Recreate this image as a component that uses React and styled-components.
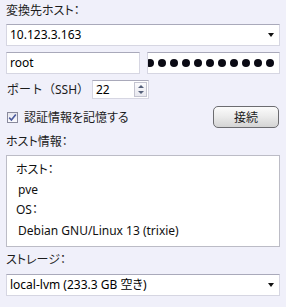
import React from "react";
import styled, { createGlobalStyle } from "styled-components";

const Global = createGlobalStyle`
  html, body { margin: 0; padding: 0; background: #f0f0fa; }
  body {
    font-family: "Noto Sans", "Noto Sans CJK JP", sans-serif;
    font-size: 12px;
    color: #111;
  }
`;

const Panel = styled.div`
  width: 286px;
  height: 307px;
  box-sizing: border-box;
  padding: 3px 6px 0 6px;
  display: flex;
  flex-direction: column;
  overflow: hidden;
`;

const Label = styled.div`
  height: 16px;
  line-height: 16px;
  color: #1c1c1c;
  font-feature-settings: "palt";
  margin-top: ${(p) => p.$mt || 0}px;
`;

const FieldBox = styled.div`
  box-sizing: border-box;
  height: ${(p) => p.$h || 22}px;
  width: ${(p) => (p.$w ? p.$w + "px" : "auto")};
  flex: ${(p) => (p.$grow ? "1 1 0" : "none")};
  background: #fff;
  border: 1px solid #d6d6e2;
  border-top-color: #a9a9ba;
  display: flex;
  align-items: center;
  padding-left: 3px;
  line-height: 16px;
  overflow: hidden;
  margin-top: ${(p) => p.$mt || 0}px;
  position: relative;
`;

const FieldText = styled.span`
  flex: 1;
  white-space: nowrap;
  color: #000;
  font-feature-settings: "palt";
`;

const Arrow = styled.span`
  width: 0;
  height: 0;
  border-left: 3.5px solid transparent;
  border-right: 3.5px solid transparent;
  border-top: 4px solid #111;
  margin-right: 5px;
  flex: none;
`;

const Row = styled.div`
  display: flex;
  align-items: center;
  gap: ${(p) => p.$gap || 0}px;
  margin-top: ${(p) => p.$mt || 0}px;
`;

const Dots = styled.div`
  display: flex;
  gap: 4px;
  margin-left: -5px;
`;

const Dot = styled.span`
  width: 8px;
  height: 8px;
  border-radius: 50%;
  background: #0a0a14;
  flex: none;
`;

const PortLabel = styled.span`
  width: 85px;
  padding-left: 1px;
  color: #1c1c1c;
  line-height: 16px;
`;

const Spinner = styled.div`
  position: absolute;
  right: 1px;
  top: 1px;
  bottom: 1px;
  width: 13px;
  border: 1px solid #c4c4d0;
  background: linear-gradient(#fbfbfd, #e8e8ef);
  box-sizing: border-box;
  display: flex;
  flex-direction: column;
  align-items: center;
  justify-content: space-evenly;
`;

const Tri = styled.span`
  width: 0;
  height: 0;
  border-left: 3px solid transparent;
  border-right: 3px solid transparent;
  ${(p) =>
    p.$up
      ? "border-bottom: 3px solid #55607a;"
      : "border-top: 3px solid #55607a;"}
`;

const Check = styled.span`
  width: 11px;
  height: 11px;
  box-sizing: border-box;
  border: 1px solid #8a8a9c;
  background: linear-gradient(#e6e6ee, #fbfbff);
  display: flex;
  align-items: center;
  justify-content: center;
  margin-left: 1px;
  flex: none;
`;

const CheckLabel = styled.span`
  margin-left: 6px;
  flex: 1;
  color: #1c1c1c;
  font-feature-settings: "palt";
`;

const Button = styled.div`
  width: 66px;
  height: 22px;
  box-sizing: border-box;
  border: 1px solid #6c6c70;
  border-radius: 5px;
  background: linear-gradient(#fbfbfb 0%, #ececec 45%, #d4d4d4 100%);
  display: flex;
  align-items: center;
  justify-content: center;
  color: #1c1c1c;
  margin-right: 1px;
`;

const InfoBox = styled.div`
  box-sizing: border-box;
  height: 92px;
  margin-top: 5px;
  background: #fff;
  border: 1px solid #bcbcc6;
  padding: 4px 0 0 9px;
  display: flex;
  flex-direction: column;
`;

const InfoLine = styled.div`
  line-height: 20px;
  height: 20px;
  padding-left: ${(p) => (p.$value ? 2 : 0)}px;
  margin-top: ${(p) => p.$mt || 0}px;
  white-space: nowrap;
  color: #111;
  font-feature-settings: "palt";
`;

export default function App() {
  return (
    <>
      <Global />
      <Panel>
        <Label>変換先ホスト：</Label>
        <FieldBox $mt={5}>
          <FieldText>10.123.3.163</FieldText>
          <Arrow />
        </FieldBox>
        <Row $mt={6} $gap={7}>
          <FieldBox $grow>
            <FieldText>root</FieldText>
          </FieldBox>
          <FieldBox $grow>
            <Dots>
              {Array.from({ length: 11 }).map((_, i) => (
                <Dot key={i} />
              ))}
            </Dots>
          </FieldBox>
        </Row>
        <Row $mt={6}>
          <PortLabel>ポート（SSH）</PortLabel>
          <FieldBox $w={57} $h={19}>
            <FieldText>22</FieldText>
            <Spinner>
              <Tri $up />
              <Tri />
            </Spinner>
          </FieldBox>
        </Row>
        <Row $mt={7}>
          <Check>
            <svg width="9" height="9" viewBox="0 0 9 9">
              <path
                d="M1.2 4.6 L3.4 7 L7.8 1.4"
                fill="none"
                stroke="#4b5a9c"
                strokeWidth="1.6"
              />
            </svg>
          </Check>
          <CheckLabel>認証情報を記憶する</CheckLabel>
          <Button>接続</Button>
        </Row>
        <Label $mt={6}>ホスト情報：</Label>
        <InfoBox>
          <InfoLine>ホスト：</InfoLine>
          <InfoLine $value>pve</InfoLine>
          <InfoLine>OS：</InfoLine>
          <InfoLine $value $mt={1}>Debian GNU/Linux 13 (trixie)</InfoLine>
        </InfoBox>
        <Label $mt={5}>ストレージ：</Label>
        <FieldBox $mt={6}>
          <FieldText>local-lvm (233.3 GB 空き)</FieldText>
          <Arrow />
        </FieldBox>
      </Panel>
    </>
  );
}
